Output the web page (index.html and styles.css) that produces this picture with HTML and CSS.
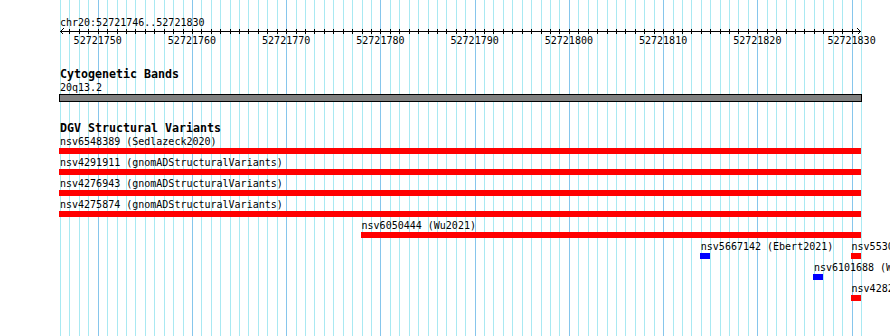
FILE: index.html
```html
<!DOCTYPE html>
<html lang="en">

<head>
    <meta charset="UTF-8">
    <meta name="viewport" content="width=device-width, initial-scale=1.0">
    <title>chr20:52721746..52721830</title>
    <link rel="stylesheet" href="styles.css">
</head>

<body>
    <div class="panel">
        <!-- one cell per base, 52721746 .. 52721830 -->
        <div class="grid-lines">
            <span></span><span></span><span></span><span></span><span></span><span></span><span></span><span></span><span></span><span></span>
            <span></span><span></span><span></span><span></span><span></span><span></span><span></span><span></span><span></span><span></span>
            <span></span><span></span><span></span><span></span><span></span><span></span><span></span><span></span><span></span><span></span>
            <span></span><span></span><span></span><span></span><span></span><span></span><span></span><span></span><span></span><span></span>
            <span></span><span></span><span></span><span></span><span></span><span></span><span></span><span></span><span></span><span></span>
            <span></span><span></span><span></span><span></span><span></span><span></span><span></span><span></span><span></span><span></span>
            <span></span><span></span><span></span><span></span><span></span><span></span><span></span><span></span><span></span><span></span>
            <span></span><span></span><span></span><span></span><span></span><span></span><span></span><span></span><span></span><span></span>
            <span></span><span></span><span></span><span></span><span></span>
        </div>

        <div class="tracks">
            <div class="ruler">
                <div class="position">chr20:52721746..52721830</div>
                <div class="axis">
                    <svg class="arrow arrow-left" width="4" height="7" viewBox="0 0 4 7"><path d="M3.5 0.5 L0.5 3.5 L3.5 6.5" /></svg>
                    <span></span><span></span><span></span><span></span><span></span><span></span><span></span><span></span><span></span><span></span>
                    <span></span><span></span><span></span><span></span><span></span><span></span><span></span><span></span><span></span><span></span>
                    <span></span><span></span><span></span><span></span><span></span><span></span><span></span><span></span><span></span><span></span>
                    <span></span><span></span><span></span><span></span><span></span><span></span><span></span><span></span><span></span><span></span>
                    <span></span><span></span><span></span><span></span><span></span><span></span><span></span><span></span><span></span><span></span>
                    <span></span><span></span><span></span><span></span><span></span><span></span><span></span><span></span><span></span><span></span>
                    <span></span><span></span><span></span><span></span><span></span><span></span><span></span><span></span><span></span><span></span>
                    <span></span><span></span><span></span><span></span><span></span><span></span><span></span><span></span><span></span><span></span>
                    <span></span><span></span><span></span><span></span><span></span>
                    <svg class="arrow arrow-right" width="4" height="7" viewBox="0 0 4 7"><path d="M0.5 0.5 L3.5 3.5 L0.5 6.5" /></svg>
                </div>
                <div class="axis-labels">
                    <span style="grid-column: 5">52721750</span>
                    <span style="grid-column: 15">52721760</span>
                    <span style="grid-column: 25">52721770</span>
                    <span style="grid-column: 35">52721780</span>
                    <span style="grid-column: 45">52721790</span>
                    <span style="grid-column: 55">52721800</span>
                    <span style="grid-column: 65">52721810</span>
                    <span style="grid-column: 75">52721820</span>
                    <span style="grid-column: 85">52721830</span>
                </div>
            </div>

            <div class="track cytoband">
                <div class="track-title">Cytogenetic Bands</div>
                <div class="feature-label">20q13.2</div>
                <div class="band"></div>
            </div>

            <div class="track dgv">
                <div class="track-title">DGV Structural Variants</div>
                <div class="features">
                    <div class="feature" style="grid-column: 1 / 86; grid-row: 1">
                        <div class="feature-label">nsv6548389 (Sedlazeck2020)</div>
                        <div class="feature-bar"></div>
                    </div>
                    <div class="feature" style="grid-column: 1 / 86; grid-row: 2">
                        <div class="feature-label">nsv4291911 (gnomADStructuralVariants)</div>
                        <div class="feature-bar"></div>
                    </div>
                    <div class="feature" style="grid-column: 1 / 86; grid-row: 3">
                        <div class="feature-label">nsv4276943 (gnomADStructuralVariants)</div>
                        <div class="feature-bar"></div>
                    </div>
                    <div class="feature" style="grid-column: 1 / 86; grid-row: 4">
                        <div class="feature-label">nsv4275874 (gnomADStructuralVariants)</div>
                        <div class="feature-bar"></div>
                    </div>
                    <div class="feature" style="grid-column: 33 / 86; grid-row: 5">
                        <div class="feature-label">nsv6050444 (Wu2021)</div>
                        <div class="feature-bar"></div>
                    </div>
                    <div class="feature" style="grid-column: 69 / 70; grid-row: 6">
                        <div class="feature-label">nsv5667142 (Ebert2021)</div>
                        <div class="feature-bar gain"></div>
                    </div>
                    <div class="feature" style="grid-column: 85 / 86; grid-row: 6">
                        <div class="feature-label">nsv5530930 (Audano2019)</div>
                        <div class="feature-bar"></div>
                    </div>
                    <div class="feature" style="grid-column: 81 / 82; grid-row: 7">
                        <div class="feature-label">nsv6101688 (Wu2021)</div>
                        <div class="feature-bar gain"></div>
                    </div>
                    <div class="feature" style="grid-column: 85 / 86; grid-row: 8">
                        <div class="feature-label">nsv4282714 (gnomADStructuralVariants)</div>
                        <div class="feature-bar"></div>
                    </div>
                </div>
            </div>
        </div>
    </div>
</body>

</html>
```

FILE: styles.css
```css
html,
body {
    margin: 0;
    overflow: hidden;
    background-color: white;
}

body {
    font-family: "DejaVu Sans Mono", monospace;
    font-size: 10px;
    line-height: 13px;
    color: black;
}

.panel {
    display: grid;
    width: 890px;
    height: 336px;
}

.grid-lines,
.tracks {
    grid-area: 1 / 1;
}

/* background grid, one line per base */
.grid-lines {
    display: grid;
    grid-template-columns: repeat(85, 1fr);
    width: 801px;
    margin-left: 60px;
    border-right: 1px solid #a9e9f2;
}

.grid-lines span {
    border-left: 1px solid #a9e9f2;
}

.grid-lines span:nth-child(10n+5) {
    border-left-color: #86c6ec;
}

.tracks {
    padding: 16px 0 0 60px;
}

/* ruler */
.axis {
    position: relative;
    display: grid;
    grid-template-columns: repeat(85, 1fr);
    width: 801px;
    height: 5px;
    background: linear-gradient(black, black) 0 2px / 100% 1px no-repeat;
}

.axis span + span {
    border-left: 1px solid black;
}

.arrow {
    position: absolute;
    top: -1px;
    fill: none;
    stroke: black;
    stroke-width: 1;
    shape-rendering: crispEdges;
}

.arrow-left {
    left: 0;
}

.arrow-right {
    right: 0;
}

.axis-labels {
    display: grid;
    grid-template-columns: repeat(85, 1fr);
    width: 801px;
    height: 13px;
}

.axis-labels span {
    grid-row: 1;
    width: 0;
    display: flex;
    justify-content: center;
    white-space: nowrap;
}

/* tracks */
.track {
    margin-top: 20px;
}

.cytoband {
    margin-top: 21px;
}

.track-title {
    font-weight: bold;
    font-size: 11.63px;
    white-space: nowrap;
}

.feature-label {
    white-space: nowrap;
}

.band {
    width: 801px;
    height: 6px;
    margin-left: -1px;
    border: 1px solid black;
    background-color: #808080;
}

.features {
    display: grid;
    grid-template-columns: repeat(85, 1fr);
    grid-auto-rows: 21px;
    width: 801px;
}

.feature {
    min-width: 0;
}

.feature-bar {
    height: 6px;
    margin-left: -1px;
    background-color: #ff0000;
}

.feature-bar.gain {
    background-color: #0000ff;
}
```
